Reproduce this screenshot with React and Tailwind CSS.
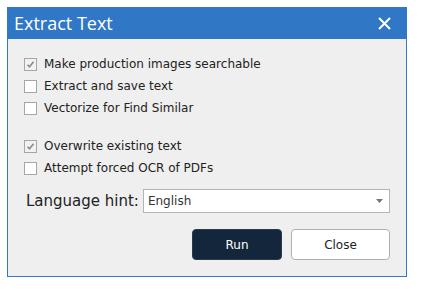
import React from 'react';

const options = [
  { label: 'Make production images searchable', checked: true },
  { label: 'Extract and save text', checked: false },
  { label: 'Vectorize for Find Similar', checked: false },
];

const options2 = [
  { label: 'Overwrite existing text', checked: true },
  { label: 'Attempt forced OCR of PDFs', checked: false },
];

function Check({ label, checked }) {
  return (
    <label className="flex items-center h-[22px] gap-[7px]">
      <span
        className={
          checked
            ? 'w-[13px] h-[13px] border border-[#a6a6a6] bg-[#f2f2f2] flex items-center justify-center'
            : 'w-[13px] h-[13px] border border-[#a6a6a6] bg-white'
        }
      >
        {checked && (
          <svg width="9" height="9" viewBox="0 0 9 9">
            <path d="M1.5 4.8 L3.5 6.8 L7.6 1.8" fill="none" stroke="#8a8a8a" strokeWidth="1.6" />
          </svg>
        )}
      </span>
      <span className="text-[12px] text-[#222]">{label}</span>
    </label>
  );
}

export default function App() {
  return (
    <div className="w-[423px] h-[294px] bg-white pt-[7px] pl-[7px] font-['DejaVu_Sans',sans-serif]">
      <div className="w-[400px] h-[270px] bg-[#efefef] border-x border-b border-[#3077c6] flex flex-col">
        <div className="h-[32px] bg-[#3077c6] flex items-center justify-between pl-[7px] pr-[16px] -mx-px">
          <span className="text-white text-[18px] font-['Open_Sans',sans-serif]">Extract Text</span>
          <svg width="13" height="13" viewBox="0 0 13 13">
            <path d="M1 1 L12 12 M12 1 L1 12" stroke="white" strokeWidth="2" />
          </svg>
        </div>

        <div className="pt-[14px] pl-[16px] pr-[16px] flex flex-col">
          {options.map((o) => (
            <Check key={o.label} {...o} />
          ))}
          <div className="h-[16px]" />
          {options2.map((o) => (
            <Check key={o.label} {...o} />
          ))}

          <div className="flex items-center mt-[10px] pl-[2px] gap-[4px]">
            <span className="text-[15px] text-[#222]">Language hint:</span>
            <div className="flex-1 h-[24px] bg-white border border-[#b5b5b5] flex items-center justify-between pl-[4px] pr-[6px]">
              <span className="text-[12px] text-[#333]">English</span>
              <svg width="7" height="4" viewBox="0 0 7 4">
                <path d="M0 0 L7 0 L3.5 4 Z" fill="#777" />
              </svg>
            </div>
          </div>

          <div className="flex justify-end gap-[9px] mt-[16px]">
            <button className="w-[90px] h-[31px] rounded-[4px] bg-[#14263c] border border-[#2a3a4e] text-white text-[12px]">
              Run
            </button>
            <button className="w-[99px] h-[31px] rounded-[4px] bg-white border border-[#b0b0b0] text-[#222] text-[12px]">
              Close
            </button>
          </div>
        </div>
      </div>
    </div>
  );
}
